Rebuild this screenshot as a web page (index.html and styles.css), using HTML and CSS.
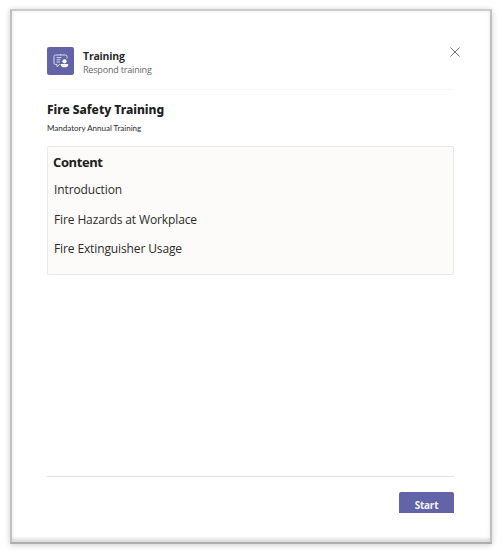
FILE: index.html
```
<!DOCTYPE html>
<html lang="en">
<head>
<meta charset="utf-8">
<title>Training</title>
<link rel="stylesheet" href="styles.css">
</head>
<body>
<main class="dialog">
  <header class="header">
    <div class="app-icon">
      <svg width="27" height="27" viewBox="0 0 27 27" fill="none" stroke="#dddcf3" stroke-width="1">
        <path d="M13.500 17.500h-1l-2.500 2.200v-2.200H8.500A1.500 1.500 0 0 1 7 16V9.500A1.500 1.500 0 0 1 8.500 8h10A1.500 1.500 0 0 1 20 9.500v2M9.500 10.600h5M9.500 12.800h4M9.500 15h3.500M13.500 7v1"/>
        <circle cx="17.500" cy="14.300" r="2.100" fill="#fff" stroke="none"/>
        <path d="M13.900 17h7.200v1.200c0 1.300-1.500 2.100-3.600 2.100s-3.600-.8-3.600-2.100z" fill="#fff" stroke="none"/>
      </svg>
    </div>
    <div class="heading">
      <div class="app-name">Training</div>
      <div class="app-action">Respond training</div>
    </div>
    <svg class="close" width="10" height="10" viewBox="0 0 10 10" fill="none" stroke="#757575" stroke-width="1"><path d="M.5.5l9 9M9.500.5l-9 9"/></svg>
  </header>
  <h1 class="title">Fire Safety Training</h1>
  <p class="subtitle">Mandatory Annual Training</p>
  <section class="content">
    <h2 class="content-title">Content</h2>
    <ul class="topics">
      <li>Introduction</li>
      <li>Fire Hazards at Workplace</li>
      <li>Fire Extinguisher Usage</li>
    </ul>
  </section>
  <footer class="footer">
    <button class="start">Start</button>
  </footer>
</main>
</body>
</html>
```
FILE: styles.css
```
* { box-sizing: border-box; }
body {
  margin: 0;
  padding: 9px 10px 10px 10px;
  height: 554px;
  background: #fff;
  font-family: "Open Sans", "Noto Sans", sans-serif;
  font-variant-ligatures: none;
  color: #2b2b2b;
}
.dialog {
  height: 535px;
  padding: 36px 36px 29px 35px;
  display: flex;
  flex-direction: column;
  border: 2px solid #c0c0c0;
  border-top-color: #cbcbcb;
  border-bottom-color: #adadad;
  background: #fff;
  box-shadow: 0 1px 6px rgba(0, 0, 0, .2), inset 0 -5px 3px -1px rgba(0, 0, 0, .1), inset 0 0 4px rgba(0, 0, 0, .08);
}
.header {
  display: flex;
  height: 43px;
  border-bottom: 1px solid #f7f7f7;
}
.app-icon {
  width: 27px;
  height: 28px;
  border-radius: 2px;
  background: #6264a7;
}
.app-icon svg { display: block; }
.heading { margin: 1px 0 0 9px; flex: 1; white-space: nowrap; }
.app-name { font-size: 10.500px; line-height: 16px; font-weight: 700; letter-spacing: -.2px; }
.app-action { font-size: 9px; line-height: 11px; color: #666; letter-spacing: -.18px; }
.close { display: block; margin-right: -6px; }
.title { margin: 11px 0 0; font-family: "Noto Sans", sans-serif; font-size: 12px; line-height: 18px; font-weight: 800; letter-spacing: -.02px; white-space: nowrap; color: #202020; }
.subtitle { margin: 3px 0 0; font-family: Lato, "Open Sans", sans-serif; font-size: 8px; line-height: 12px; white-space: nowrap; }
.content {
  height: 129px;
  margin-top: 12px;
  padding: 5px 5px;
  border: 1px solid #e9e9e7;
  border-radius: 2px;
  background: #fcfbf9;
}
.content-title { margin: 0; font-size: 13px; line-height: 20px; font-weight: 700; letter-spacing: -.4px; color: #202020; }
.topics { margin: 3px 0 0 1px; padding: 0; list-style: none; font-size: 12px; line-height: 29.500px; font-weight: 500; letter-spacing: -.12px; white-space: nowrap; }
.footer {
  margin-top: auto;
  height: 37px;
  padding-top: 15px;
  border-top: 1px solid #e2e2e2;
  display: flex;
  justify-content: flex-end;
}
.start {
  width: 55px;
  height: 21px;
  padding: 5px 0 0;
  border: 0;
  border-radius: 2px 2px 0 0;
  background: #6264a7;
  color: #f4f4fc;
  font: 700 10px/16px "Open Sans", sans-serif;
  letter-spacing: -.25px;
}
```
